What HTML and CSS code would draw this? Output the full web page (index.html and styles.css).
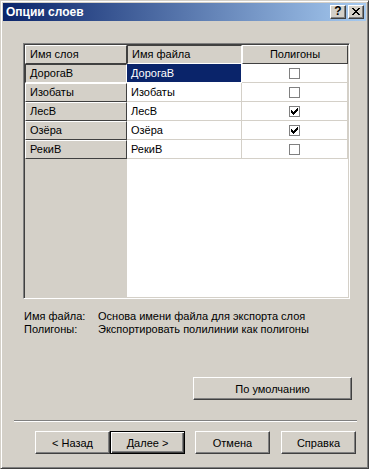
FILE: index.html
```html
<!DOCTYPE html>
<html lang="ru">
<head>
  <meta charset="UTF-8" /><meta name="viewport" content="width=device-width, initial-scale=1.0"/>
  <title>Опции слоев</title>
  <link rel="stylesheet" href="styles.css">
</head>
<body>
  <div class="window">
    <div class="titlebar">
      <span class="title">Опции слоев</span>
      <div class="title-btns">
        <button class="tb help">?</button>
        <button class="tb close">
          <svg width="8" height="7" viewBox="0 0 8 7" shape-rendering="crispEdges"><path d="M0 0h2v1H0zM6 0h2v1H6zM1 1h2v1H1zM5 1h2v1H5zM2 2h4v1H2zM3 3h2v1H3zM2 4h4v1H2zM1 5h2v1H1zM5 5h2v1H5zM0 6h2v1H0zM6 6h2v1H6z" fill="#000"/></svg>
        </button>
      </div>
    </div>

    <div class="content">
      <div class="grid">
        <div class="row">
          <div class="cell fixed">Имя слоя</div>
          <div class="cell fixed sunk">Имя файла</div>
          <div class="cell fixed center">Полигоны</div>
        </div>
        <div class="row">
          <div class="cell fixed sunk">ДорогаВ</div>
          <div class="cell data sel">ДорогаВ</div>
          <div class="cell data check"><span class="cb"></span></div>
        </div>
        <div class="row">
          <div class="cell fixed">Изобаты</div>
          <div class="cell data">Изобаты</div>
          <div class="cell data check"><span class="cb"></span></div>
        </div>
        <div class="row">
          <div class="cell fixed">ЛесВ</div>
          <div class="cell data">ЛесВ</div>
          <div class="cell data check"><span class="cb on"></span></div>
        </div>
        <div class="row">
          <div class="cell fixed">Озёра</div>
          <div class="cell data">Озёра</div>
          <div class="cell data check"><span class="cb on"></span></div>
        </div>
        <div class="row">
          <div class="cell fixed">РекиВ</div>
          <div class="cell data">РекиВ</div>
          <div class="cell data check"><span class="cb"></span></div>
        </div>
      </div>

      <div class="legend">
        <span>Имя файла:</span><span>Основа имени файла для экспорта слоя</span>
        <span>Полигоны:</span><span>Экспортировать полилинии как полигоны</span>
      </div>

      <div class="defaults">
        <button class="btn wide">По умолчанию</button>
      </div>

      <hr class="sep">

      <div class="nav">
        <button class="btn">&lt; Назад</button>
        <button class="btn default">Далее &gt;</button>
        <button class="btn gap">Отмена</button>
        <button class="btn gap2">Справка</button>
      </div>
    </div>
  </div>

  <script>
    // tick marks for the "Полигоны" column
    document.querySelectorAll('.cb').forEach(function (box) {
      var tick = box.classList.contains('on')
        ? '<path d="M2 4h1v3H2zM3 5h1v3H3zM4 6h1v3H4zM5 5h1v3H5zM6 4h1v3H6zM7 3h1v3H7zM8 2h1v3H8z" fill="#000"/>'
        : '';
      box.innerHTML = '<svg width="11" height="11" viewBox="0 0 11 11" shape-rendering="crispEdges">' +
        '<rect x="0.5" y="0.5" width="10" height="10" fill="#fff" stroke="#808080"/>' + tick + '</svg>';
    });
  </script>
</body>
</html>
```

FILE: styles.css
```css
* { box-sizing: border-box; margin: 0; padding: 0; }

body {
  background: #d4d0c8;
  font-family: 'Liberation Sans', Arial, sans-serif;
  font-size: 11px;
  color: #000;
}

.window {
  width: 369px;
  height: 469px;
  background: #d4d0c8;
  border: 1px solid;
  border-color: #d4d0c8 #404040 #404040 #d4d0c8;
  box-shadow: inset 1px 1px #fff, inset -1px -1px #808080;
  padding: 2px;
}

.titlebar {
  height: 18px;
  display: flex;
  align-items: center;
  justify-content: space-between;
  padding: 0 2px 0 3px;
  background: linear-gradient(to right, #0a246a, #a6caf0);
}

.title {
  color: #fff;
  font-weight: bold;
  font-size: 12px;
}

.title-btns {
  display: flex;
  gap: 2px;
}

.tb {
  width: 16px;
  height: 14px;
  background: #d4d0c8;
  border: 1px solid;
  border-color: #fff #404040 #404040 #fff;
  box-shadow: inset -1px -1px #808080;
  font-family: 'Liberation Sans', Arial, sans-serif;
  font-size: 12px;
  font-weight: bold;
  line-height: 11px;
  display: flex;
  align-items: center;
  justify-content: center;
  padding-bottom: 1px;
}

.content {
  padding-top: 22px;
}

.grid {
  margin-left: 20px;
  width: 327px;
  height: 256px;
  border: 1px solid;
  border-color: #808080 #fff #fff #808080;
  box-shadow: inset 1px 1px #404040, inset -1px -1px #d4d0c8;
  padding: 1px;
  background: linear-gradient(to right, #d4d0c8 103px, #fff 103px);
}

.row {
  display: grid;
  grid-template-columns: 102px 115px 106px;
  height: 19px;
}

.cell {
  padding-left: 4px;
  line-height: 17px;
  white-space: nowrap;
  overflow: hidden;
}

.cell.fixed {
  background: #d4d0c8;
  border: 1px solid;
  border-color: #fff #404040 #404040 #fff;
}

.cell.sunk {
  border-color: #404040 #fff #fff #404040;
}

.cell.center {
  text-align: center;
  padding-left: 0;
}

.cell.data {
  background: #fff;
  border-right: 1px solid #d4d0c8;
  border-bottom: 1px solid #d4d0c8;
  line-height: 18px;
}

.cell.sel {
  background: #0a246a;
  color: #fff;
  border-color: #fff;
}

.cell.check {
  display: flex;
  align-items: center;
  justify-content: center;
  padding-left: 0;
}

.cb {
  width: 11px;
  height: 11px;
  display: block;
}

.cb svg { display: block; }

.legend {
  margin: 11px 0 0 21px;
  display: grid;
  grid-template-columns: 74px auto;
  line-height: 13px;
}

.btn {
  height: 23px;
  width: 75px;
  background: #d4d0c8;
  border: 1px solid;
  border-color: #fff #404040 #404040 #fff;
  box-shadow: inset -1px -1px #808080;
  font-family: 'Liberation Sans', Arial, sans-serif;
  font-size: 11px;
  color: #000;
}

.btn.wide { width: 159px; }

.btn.default {
  border-color: #000;
  box-shadow: inset 1px 1px #fff, inset -1px -1px #404040, inset -2px -2px #808080;
}

.defaults {
  display: flex;
  justify-content: flex-end;
  margin-top: 41px;
  padding-right: 14px;
}

.sep {
  border: none;
  border-top: 1px solid #808080;
  border-bottom: 1px solid #fff;
  margin: 20px 9px 0 11px;
}

.nav {
  display: flex;
  justify-content: flex-end;
  margin-top: 9px;
  padding-right: 10px;
}

.btn.gap { margin-left: 10px; }
.btn.gap2 { margin-left: 11px; }
```
